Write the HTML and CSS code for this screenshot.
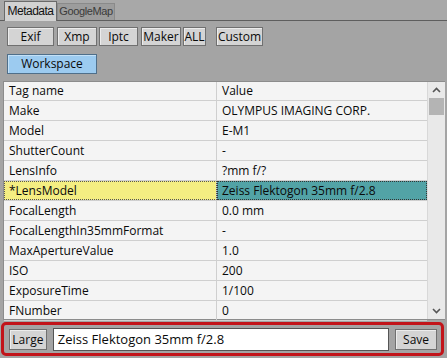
FILE: index.html
```html
<!DOCTYPE html>
<html>
<head>
<meta charset="utf-8">
<link rel="stylesheet" href="styles.css">
</head>
<body>
<div class="app">
  <div class="tabs">
    <div class="tab active">Metadata</div>
    <div class="tab gm">GoogleMap</div>
  </div>
  <div class="btnrow">
    <div class="btn w-exif">Exif</div>
    <div class="btn w-xmp">Xmp</div>
    <div class="btn w-iptc">Iptc</div>
    <div class="btn w-maker">Maker</div>
    <div class="btn w-all">ALL</div>
    <div class="btn w-custom">Custom</div>
  </div>
  <div class="btnrow2">
    <div class="btn ws">Workspace</div>
  </div>
  <div class="grid">
    <div class="rows">
      <div class="row head"><div class="c1">Tag name</div><div class="c2">Value</div></div>
      <div class="row"><div class="c1">Make</div><div class="c2">OLYMPUS IMAGING CORP.</div></div>
      <div class="row"><div class="c1">Model</div><div class="c2">E-M1</div></div>
      <div class="row"><div class="c1">ShutterCount</div><div class="c2">-</div></div>
      <div class="row"><div class="c1">LensInfo</div><div class="c2">?mm f/?</div></div>
      <div class="row sel"><div class="c1">*LensModel</div><div class="c2">Zeiss Flektogon 35mm f/2.8</div></div>
      <div class="row"><div class="c1">FocalLength</div><div class="c2">0.0 mm</div></div>
      <div class="row"><div class="c1">FocalLengthIn35mmFormat</div><div class="c2">-</div></div>
      <div class="row"><div class="c1">MaxApertureValue</div><div class="c2">1.0</div></div>
      <div class="row"><div class="c1">ISO</div><div class="c2">200</div></div>
      <div class="row"><div class="c1">ExposureTime</div><div class="c2">1/100</div></div>
      <div class="row"><div class="c1">FNumber</div><div class="c2">0</div></div>
    </div>
    <div class="scroll">
      <div class="arrow"><svg width="9" height="6" viewBox="0 0 9 6"><path d="M1 5 L4.5 1.5 L8 5" fill="none" stroke="#555" stroke-width="1.6"/></svg></div>
      <div class="thumb"></div>
      <div class="track"></div>
      <div class="arrow"><svg width="9" height="6" viewBox="0 0 9 6"><path d="M1 1 L4.5 4.5 L8 1" fill="none" stroke="#555" stroke-width="1.6"/></svg></div>
    </div>
  </div>
  <div class="bottom">
    <div class="btn large">Large</div>
    <div class="input">Zeiss Flektogon 35mm f/2.8</div>
    <div class="btn save">Save</div>
  </div>
</div>
</body>
</html>
```
FILE: styles.css
```css
html, body {
  margin: 0;
  padding: 0;
}
body {
  width: 447px;
  height: 358px;
  background: #a4a4a4;
  font-family: "Open Sans", "Noto Sans", sans-serif;
  font-size: 12px;
  color: #0a0a0a;
  overflow: hidden;
}
.app {
  display: flex;
  flex-direction: column;
  height: 358px;
}
.tabs {
  display: flex;
  align-items: flex-end;
  height: 20px;
  padding-left: 4px;
  border-bottom: 1px solid #5e5e5e;
  background: #a8a8a8;
}
.tab {
  height: 17px;
  line-height: 15px;
  width: 58px;
  text-align: center;
  border: 1px solid #8a8a8a;
  border-bottom: none;
  background: #9c9c9c;
  color: #3a3a3a;
  box-sizing: border-box;
  font-family: "Liberation Sans", Arial, sans-serif;
  font-size: 11px;
  letter-spacing: -0.4px;
  white-space: nowrap;
}
.tab.active {
  width: 53px;
  height: 20px;
  line-height: 19px;
  background: #d2d2d2;
  border-color: #6a6a6a;
  color: #111;
  margin-bottom: -1px;
  font-size: 12px;
  letter-spacing: -0.5px;
}
.btnrow {
  display: flex;
  padding: 6px 0 0 7px;
}
.btn {
  box-sizing: border-box;
  height: 19px;
  line-height: 17px;
  text-align: center;
  background: #d4d4d4;
  border: 1px solid #707070;
  box-shadow: inset 1px 1px 0 #ececec;
}
.w-exif { width: 47px; }
.w-xmp { width: 40px; margin-left: 3px; }
.w-iptc { width: 39px; margin-left: 2px; }
.w-maker { width: 40px; margin-left: 3px; }
.w-all { width: 23px; margin-left: 2px; }
.w-custom { width: 47px; margin-left: 10px; }
.btnrow2 {
  display: flex;
  padding: 8px 0 0 7px;
}
.ws {
  width: 90px;
  height: 20px;
  line-height: 18px;
  background: #9ccbf0;
  border-color: #4f6f8a;
  box-shadow: inset 1px 1px 0 #c4e1f7;
}
.grid {
  display: flex;
  margin: 7px 2px 0 3px;
  height: 239px;
  background: #f4f4f4;
  border: 1px solid #8c8c8c;
  border-right: none;
  box-sizing: border-box;
}
.rows {
  width: 423px;
  display: flex;
  flex-direction: column;
}
.row {
  display: flex;
  height: 20px;
  box-sizing: border-box;
  border-bottom: 1px solid #cfcfcf;
  line-height: 19px;
}
.row.head {
  height: 19px;
  line-height: 18px;
}
.c1 {
  width: 213px;
  padding-left: 5px;
  box-sizing: border-box;
  border-right: 1px solid #cfcfcf;
}
.c2 {
  flex: 1;
  padding-left: 5px;
  box-sizing: border-box;
}
.row.sel .c1 {
  background: #f4ee82;
  outline: 1px dotted #555;
  outline-offset: -1px;
}
.row.sel .c2 {
  background: #52a3a6;
  outline: 1px dotted #333;
  outline-offset: -1px;
}
.scroll {
  width: 17px;
  display: flex;
  flex-direction: column;
  background: #e9e9e9;
  border-left: 1px solid #d8d8d8;
}
.arrow {
  height: 16px;
  display: flex;
  align-items: center;
  justify-content: center;
}
.thumb {
  height: 17px;
  margin: 0 1px;
  background: #b4b4b4;
}
.track {
  flex: 1;
}
.bottom {
  display: flex;
  align-items: center;
  margin: 2px 3px 0 1px;
  height: 34px;
  box-sizing: border-box;
  border: 3px solid #c2141a;
  border-radius: 5px;
  padding: 0 4px 0 5px;
  gap: 6px;
}
.large {
  width: 38px;
  height: 21px;
  line-height: 19px;
}
.input {
  width: 338px;
  height: 23px;
  line-height: 21px;
  box-sizing: border-box;
  background: #fff;
  border: 1px solid #555;
  padding-left: 4px;
  font-size: 13px;
}
.save {
  width: 42px;
  height: 21px;
  line-height: 19px;
}
```
